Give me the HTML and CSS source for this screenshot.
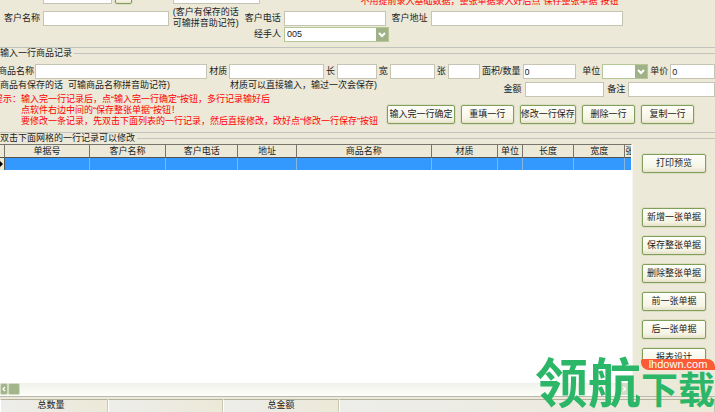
FILE: index.html
```html
<!DOCTYPE html>
<html lang="zh-CN">
<head>
<meta charset="utf-8">
<title>单据录入</title>
<link rel="stylesheet" href="styles.css">
</head>
<body>
<form class="app">
  <section class="customer">
    <div class="row row-doc">
      <label for="date">单据日期</label>
      <input id="date" type="text">
      <button class="btn" type="button">...</button>
      <label for="doc">单据号</label>
      <input id="doc" type="text">
      <p class="red">不用提前录入基础数据，整张单据录入好后点“保存整张单据”按钮</p>
    </div>
    <div class="row row-customer">
      <label for="name">客户名称</label>
      <input id="name" type="text">
      <p class="hint">(客户有保存的话<br>可输拼音助记符)</p>
      <label for="phone">客户电话</label>
      <input id="phone" type="text">
      <label for="address">客户地址</label>
      <input id="address" type="text">
    </div>
    <div class="row row-handler">
      <label for="handler">经手人</label>
      <span class="combo">
        <select id="handler"><option>005</option></select>
        <svg viewBox="0 0 12 12" aria-hidden="true"><path d="M3 4.5l3 3 3-3"/></svg>
      </span>
    </div>
  </section>

  <fieldset class="entry">
    <legend>输入一行商品记录</legend>
    <div class="row row-goods">
      <label for="goods">商品名称</label>
      <input id="goods" type="text">
      <label for="material">材质</label>
      <input id="material" type="text">
      <label for="len">长</label>
      <input id="len" type="text">
      <label for="wid">宽</label>
      <input id="wid" type="text">
      <label for="sheets">张</label>
      <input id="sheets" type="text">
      <label for="qty">面积/数量</label>
      <input id="qty" type="text" value="0">
      <label for="unit">单位</label>
      <span class="combo">
        <select id="unit"><option></option></select>
        <svg viewBox="0 0 12 12" aria-hidden="true"><path d="M3 4.5l3 3 3-3"/></svg>
      </span>
      <label for="price">单价</label>
      <input id="price" type="text" value="0">
    </div>
    <div class="lower">
      <div class="notes">
        <div class="note-pair">
          <p>(商品有保存的话&nbsp; 可输商品名称拼音助记符)</p>
          <p>材质可以直接输入，输过一次会保存)</p>
        </div>
        <div class="red tips">
          <p>提示：输入完一行记录后，点“输入完一行确定”按钮，多行记录输好后</p>
          <p class="indent">点软件右边中间的“保存整张单据”按钮！</p>
          <p class="indent">要修改一条记录，先双击下面列表的一行记录，然后直接修改，改好点“修改一行保存”按钮</p>
        </div>
      </div>
      <div class="actions">
        <div class="row row-amount">
          <label for="amount">金额</label>
          <input id="amount" type="text">
          <label for="remark">备注</label>
          <input id="remark" type="text">
        </div>
        <div class="row-buttons">
          <button class="btn" type="button">输入完一行确定</button>
          <button class="btn" type="button">重填一行</button>
          <button class="btn" type="button">修改一行保存</button>
          <button class="btn" type="button">删除一行</button>
          <button class="btn" type="button">复制一行</button>
        </div>
      </div>
    </div>
  </fieldset>

  <fieldset class="list">
    <legend>双击下面网格的一行记录可以修改</legend>
    <div class="list-body">
      <div class="sheet">
        <table>
          <colgroup>
            <col class="c-mark"><col class="c-doc"><col class="c-name"><col class="c-phone"><col class="c-addr"><col class="c-goods"><col class="c-mat"><col class="c-unit"><col class="c-len"><col class="c-wid"><col class="c-num">
          </colgroup>
          <thead>
            <tr><th></th><th>单据号</th><th>客户名称</th><th>客户电话</th><th>地址</th><th>商品名称</th><th>材质</th><th>单位</th><th>长度</th><th>宽度</th><th>张</th></tr>
          </thead>
          <tbody>
            <tr><td class="mark"><svg viewBox="0 0 4 8" aria-hidden="true"><path d="M0 1l3 3-3 3z"/></svg></td><td></td><td></td><td></td><td></td><td></td><td></td><td></td><td></td><td></td><td></td></tr>
          </tbody>
        </table>
        <div class="scroll">
          <button class="scroll-btn" type="button" aria-label="向左"><svg viewBox="0 0 12 12" aria-hidden="true"><path d="M6 3l-3 3 3 3"/></svg></button>
          <span class="thumb"></span>
          <button class="scroll-btn scroll-end" type="button" aria-label="向右"><svg viewBox="0 0 12 12" aria-hidden="true"><path d="M5 3l3 3-3 3"/></svg></button>
        </div>
      </div>
      <div class="side">
        <button class="btn print" type="button">打印预览</button>
        <button class="btn" type="button">新增一张单据</button>
        <button class="btn" type="button">保存整张单据</button>
        <button class="btn" type="button">删除整张单据</button>
        <button class="btn" type="button">前一张单据</button>
        <button class="btn" type="button">后一张单据</button>
        <button class="btn" type="button">报表设计</button>
      </div>
    </div>
  </fieldset>

  <footer class="status">
    <span>总数量</span><span></span><span>总金额</span><span></span>
  </footer>
</form>
<div class="watermark">
  <span class="big">领航</span>
  <span class="right"><span class="site">lhdown.com</span><span class="small">下载</span></span>
</div>
</body>
</html>
```
FILE: styles.css
```css
* { box-sizing: border-box; }

body {
  margin: 0;
  height: 100vh;
  overflow: hidden;
  position: relative;
  background: #ece9d8;
  color: #222;
  font: 9px/11px "Liberation Sans", "Noto Sans CJK SC", sans-serif;
}

p { margin: 0; white-space: nowrap; }

label { white-space: nowrap; text-align: right; }

input, select, button { font: inherit; color: inherit; }

input, select {
  display: block;
  width: 100%;
  min-width: 0;
  height: 15px;
  padding: 0 1px;
  background: #fff;
  border: 1px solid #c6c5b4;
  border-radius: 0;
}

select { appearance: none; padding-left: 2px; border-color: #b4c795; }

.combo { position: relative; display: block; }

.combo svg {
  position: absolute;
  top: 1px;
  right: 1px;
  width: 12px;
  height: 13px;
  background: #9fb287;
  fill: none;
  stroke: #fff;
  stroke-width: 2;
}

.btn {
  height: 19px;
  padding: 0;
  white-space: nowrap;
  background: linear-gradient(#fffffa, #f6f4e4 75%, #e6e1cb);
  border: 1px solid #7f9f5b;
  border-radius: 2px;
  box-shadow: 0 0 0 1px #dcdec3;
}

.red { color: #f00; }

.app { display: flex; flex-direction: column; height: 100%; }

.row { display: grid; align-items: center; column-gap: 3px; }

.customer {
  height: 48px;
  overflow: hidden;
  border-bottom: 1px solid #c3c3be;
}

.row-doc {
  grid-template-columns: 36px 69fr 17px 35px 87fr 95fr 355fr;
  height: 17px;
  margin-top: -10px;
  padding-left: 4px;
  align-items: start;
}

.row-doc input { height: 14px; }
.row-doc .btn { height: 14px; line-height: 9px; }
.row-doc label { padding-top: 1px; }
.row-doc .red { grid-column: 7; align-self: end; }

.row-customer {
  grid-template-columns: 36px 126fr 68px 38px 102fr 39px 193fr 89fr;
  height: 20px;
  padding-left: 4px;
}

.hint { text-align: center; }

.row-handler { grid-template-columns: 281fr 105fr 323fr; }

fieldset { margin: 0; padding: 0; border: 0; min-width: 0; }

legend {
  padding: 0 2px 0 0;
  line-height: 11px;
}

.entry { border-top: 1px solid #c3c3be; border-bottom: 1px solid #c3c3be; }

.row-goods {
  grid-template-columns: 33px 173fr 18px 95fr 9px 40fr 9px 45fr 9px 32fr 39px 54fr 22px 46fr 18px 45fr;
  column-gap: 2px;
  padding-top: 5px;
}

.row-goods label:first-child { direction: ltr; margin-left: -2px; }

.lower { display: grid; grid-template-columns: 387fr 328fr; }

.notes { padding-top: 1px; }

.note-pair { display: grid; grid-template-columns: 230fr 157fr; }

.note-pair p:first-child { margin-left: -3px; }

.tips { padding-top: 3px; }
.tips p:first-child { margin-left: -6px; }
.indent { padding-left: 21px; }

.actions { padding-top: 3px; }

.row-amount { grid-template-columns: 135fr 80fr 18px 87fr; }

.row-buttons {
  display: grid;
  grid-template-columns: 69fr 54fr 54fr 54fr 54fr;
  column-gap: 6px;
  padding: 8px 21px 8px 0;
}

.list {
  flex: 1;
  display: flex;
  flex-direction: column;
  min-height: 0;
  border-top: 1px solid #c3c3be;
}

.list-body {
  flex: 1;
  min-height: 0;
  height: 100%;
  display: grid;
  grid-template-columns: 632fr 83fr;
}

.sheet {
  display: flex;
  flex-direction: column;
  min-height: 0;
  background: #fff;
  border-top: 1px solid #77756c;
  border-right: 1px solid #fff;
}

table {
  width: 100%;
  table-layout: fixed;
  border-collapse: separate;
  border-spacing: 0;
}

th, td { padding: 0; overflow: hidden; }

th {
  height: 13px;
  font-weight: 400;
  line-height: 11px;
  white-space: nowrap;
  background: #ece9d8;
  border-right: 1px solid #77756c;
  border-bottom: 1px solid #55534c;
}

td { height: 12px; background: #39f; border-right: 1px solid #87b7df; }

th:last-child, td:last-child { border-right: 0; }

.mark { background: #ece9d8; border-right-color: #55534c; }
.mark svg { display: block; width: 4px; height: 8px; }

.c-mark { width: 5px; }
.c-doc { width: 13.5%; }
.c-name { width: 12%; }
.c-phone { width: 11.5%; }
.c-addr { width: 9.2%; }
.c-goods { width: 21.5%; }
.c-mat { width: 10.4%; }
.c-unit { width: 4%; }
.c-len { width: 8.1%; }
.c-wid { width: 8.1%; }

.scroll {
  display: flex;
  height: 13px;
  margin-top: auto;
  background: linear-gradient(#f1f1ec, #fdfef8);
}

.scroll-btn, .thumb {
  width: 12px;
  height: 12px;
  padding: 0;
  background: #a3b58b;
  border: 1px solid #d4dcc5;
  border-radius: 2px;
}

.scroll-btn:first-child { width: 8px; }
.scroll-btn svg { display: block; width: 8px; height: 10px; fill: none; stroke: #fff; stroke-width: 2; }
.scroll-end { margin-left: auto; background: #d5dbc8; }

.side {
  display: flex;
  flex-direction: column;
  gap: 9px;
  padding: 10px 9px 0;
  border-left: 1px solid #f6f5ee;
  overflow: hidden;
}

.side .btn { flex: none; }
.side .print { margin-bottom: 26px; }

.status {
  display: grid;
  grid-template-columns: 108fr 115fr 116fr 376fr;
  height: 16px;
  padding-top: 2px;
  border-top: 1px solid #b9b9b4;
}

.status span {
  padding-right: 6px;
  line-height: 10px;
  text-align: center;
  border-top: 1px solid #b5b2a0;
  border-right: 1px solid #cbc8b4;
  border-left: 1px solid #fff;
  background: linear-gradient(90deg, #ededea, #ece9d8);
}

.status span:nth-child(3) { padding-right: 0; }

.watermark {
  position: absolute;
  right: 0;
  bottom: 6px;
  display: flex;
  align-items: flex-end;
  color: #2cb768;
  font-family: "Noto Sans CJK SC", sans-serif;
  font-weight: 700;
}

.big { font-size: 53px; line-height: 52px; }
.right { display: flex; flex-direction: column; width: 74px; }
.small { font-size: 37px; line-height: 36px; }

.site {
  height: 11px;
  color: #fff;
  background: #fb5b35;
  border-radius: 2px 8px 0 8px;
  font: 11px/11px "Liberation Sans", sans-serif;
  text-align: center;
}
```
